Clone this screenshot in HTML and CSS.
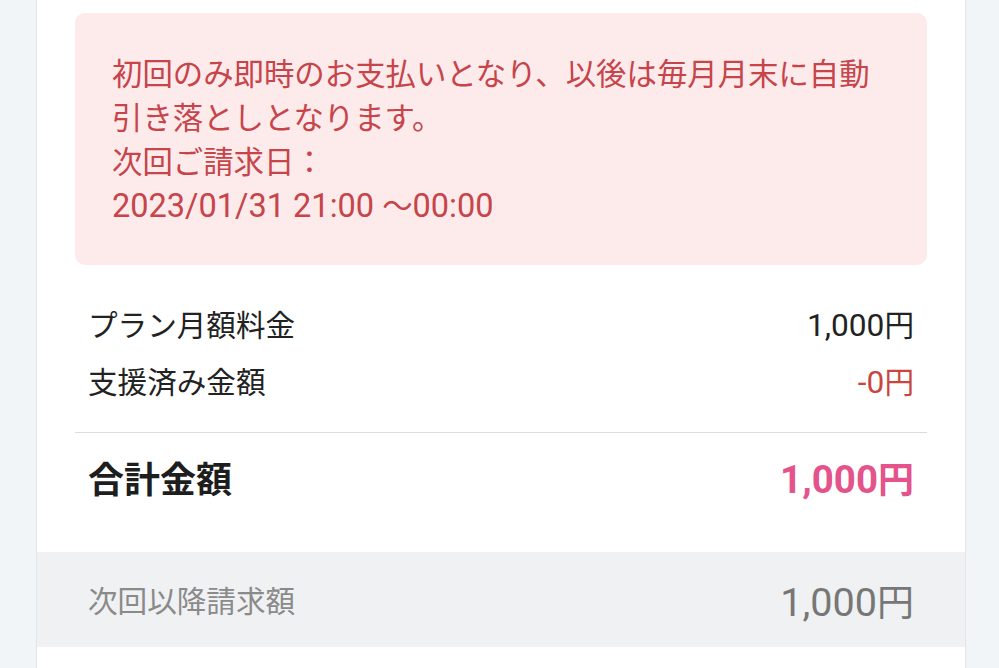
FILE: index.html
```html
<!DOCTYPE html>
<html lang="ja">
<head>
  <meta charset="UTF-8" />
  <meta name="viewport" content="width=device-width, initial-scale=1.0"/>
  <title>お支払い内容</title>
  <link rel="stylesheet" href="styles.css">
</head>
<body>
  <div class="card">
    <div class="content">
      <!-- Notice box -->
      <div class="notice">
        初回のみ即時のお支払いとなり、以後は毎月月末に自動引き落としとなります。<br>
        次回ご請求日：<br>
        <span class="num">2023/01/31 21:00 </span>～<span class="num">00:00</span>
      </div>

      <div class="rows">
        <div class="row">
          <span>プラン月額料金</span>
          <span><span class="num">1,000</span>円</span>
        </div>
        <div class="row">
          <span>支援済み金額</span>
          <span class="minus"><span class="num">-0</span>円</span>
        </div>
      </div>

      <div class="total">
        <span>合計金額</span>
        <span class="total-price"><span class="num">1,000</span>円</span>
      </div>
    </div>

    <div class="next">
      <span>次回以降請求額</span>
      <span class="next-price"><span class="num">1,000</span>円</span>
    </div>
  </div>
</body>
</html>
```

FILE: styles.css
```css
body {
  margin: 0;
  padding: 0;
  background: #f2f5f8;
  font-family: 'Roboto', 'Noto Sans CJK JP', sans-serif;
  color: #222;
  overflow: hidden;
}

/* latin digits render a bit larger than the kana/kanji */
.num {
  font-size: 1.07em;
  line-height: 1;
}

.card {
  box-sizing: border-box;
  width: 930px;
  height: 668px;
  margin-left: 36px;
  background: #fff;
  border-left: 1px solid #e2e5e9;
  border-right: 1px solid #e2e5e9;
}

.content {
  padding: 13px 38px 0;
}

.notice {
  background: #fdeaeb;
  color: #c6444a;
  border-radius: 10px;
  padding: 40px 37px 36px;
  font-size: 30.4px;
  line-height: 44px;
}

.rows {
  padding: 30px 13px 23px;
}

.row {
  display: flex;
  justify-content: space-between;
  align-items: center;
  height: 57px;
  font-size: 29.6px;
}

.minus {
  color: #c9463f;
}

.total {
  display: flex;
  justify-content: space-between;
  align-items: center;
  border-top: 1px solid #dcdcdc;
  padding: 19px 13px 50px;
  height: 50px;
  font-size: 36px;
  font-weight: 700;
  color: #1e1e1e;
}

.total-price {
  color: #e4538b;
}

.next {
  display: flex;
  justify-content: space-between;
  align-items: center;
  height: 95px;
  padding: 0 51px;
  background: #f0f1f3;
  color: #8a8a8a;
  font-size: 29.6px;
}

.next-price {
  font-size: 37px;
  color: #777;
}
```
